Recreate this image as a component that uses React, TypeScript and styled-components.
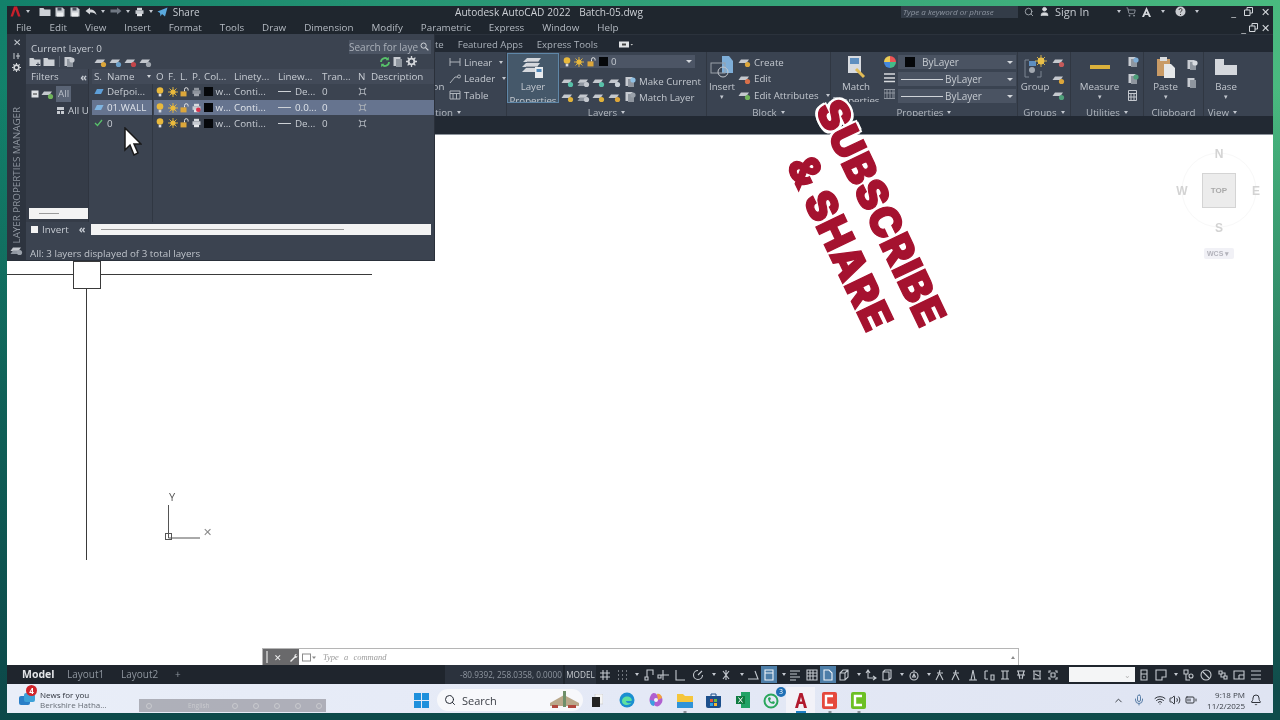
import React from 'react';
import styled, { createGlobalStyle } from 'styled-components';
import { ChevronUp, Mic, Wifi, Volume2, BatteryMedium, Search as SearchIcon, User, ShoppingCart, Bell } from 'lucide-react';

const GlobalStyle = createGlobalStyle`
  html, body { margin: 0; padding: 0; background: #0e5552; }
  * { box-sizing: border-box; }
  svg { flex: none; }
  #root { width: 1280px; height: 720px; overflow: hidden; }
`;

const Frame = styled.div`
  width: 1280px;
  height: 720px;
  padding: 6px 7px 7px 7px;
  font-family: 'Open Sans', 'Liberation Sans', sans-serif;
  background: linear-gradient(180deg, rgba(12, 70, 72, 0) 12%, rgba(12, 70, 72, 0.55) 55%, rgba(12, 70, 72, 0.95) 96%),
    linear-gradient(95deg, #12806a 0%, #2c9a76 40%, #4cbc80 100%);
  filter: blur(0.35px);
`;

const Window = styled.div`
  position: relative;
  display: flex;
  flex-direction: column;
  height: 100%;
  overflow: hidden;
  background: #fff;
`;

const TitleBar = styled.div`
  display: flex;
  align-items: center;
  height: 14px;
  flex: none;
  padding-bottom: 3px;
  background: #1f262e;
  color: #c6cbd1;
  font-size: 10px;
  white-space: nowrap;
`;

const QuickAccess = styled.div`
  display: flex;
  align-items: center;
  gap: 4.6px;
  width: 448px;
  padding-left: 3px;
  font-size: 10px;
`;

const DocTitle = styled.div`
  width: 446px;
  font-size: 10.1px;
  word-spacing: 0.3px;
  color: #ccd0d5;
`;

const KeywordBox = styled.div`
  width: 117px;
  height: 12px;
  margin-right: 6px;
  padding-left: 2px;
  background: #333c48;
  color: #8d95a1;
  font-size: 8px;
  font-style: italic;
  line-height: 12px;
`;

const TitleTools = styled.div`
  display: flex;
  align-items: center;
  flex: 1;
  gap: 5px;
  font-size: 11px;
`;

const ToolGap = styled.span<{ $w: number }>`
  display: inline-block;
  width: ${({ $w }) => $w}px;
  flex: none;
`;

const WinButtons = styled.div<{ $small?: boolean }>`
  display: flex;
  align-items: center;
  gap: ${({ $small }) => ($small ? 3 : 8)}px;
  margin-left: auto;
  padding-right: 3px;
  font-size: 11px;
  color: #d4d8dc;
`;

const MenuBar = styled.div`
  display: flex;
  align-items: center;
  height: 14px;
  flex: none;
  gap: 18px;
  padding-left: 9px;
  background: #1f262e;
  color: #b4bac2;
  font-size: 9.8px;
  white-space: nowrap;
`;

const TabRow = styled.div`
  display: flex;
  align-items: center;
  height: 18px;
  flex: none;
  gap: 14px;
  padding: 2px 0 0 385px;
  background: #222933;
  border-top: 1px solid #2b323c;
  color: #aab1ba;
  font-size: 9.6px;
  white-space: nowrap;
`;

const TabFlag = styled.svg`
  margin-left: 7px;
`;

const Ribbon = styled.div`
  display: flex;
  height: 64px;
  flex: none;
  overflow: hidden;
  background: #3a4351;
  color: #c3c8cf;
  font-size: 9.7px;
  white-space: nowrap;
`;

const Panel = styled.div<{ $w: number }>`
  display: flex;
  flex-direction: column;
  width: ${({ $w }) => $w}px;
  flex: none;
  border-right: 1px solid #303742;
`;

const PanelBody = styled.div<{ $end?: boolean }>`
  display: flex;
  height: 53px;
  padding-top: 2px;
  justify-content: ${({ $end }) => ($end ? 'flex-end' : 'flex-start')};
`;

const PanelLabel = styled.div<{ $pr?: number }>`
  height: 11px;
  padding-right: ${({ $pr }) => $pr ?? 0}px;
  text-align: ${({ $pr }) => ($pr ? 'right' : 'center')};
  line-height: 16px;
  font-size: 9.7px;
  color: #b3b9c1;
`;

const Caret = styled.span`
  display: inline-block;
  margin-left: 4px;
  vertical-align: 2px;
  border-left: 2.5px solid transparent;
  border-right: 2.5px solid transparent;
  border-top: 3px solid #c3c8cf;
`;

const QuickCaret = styled(Caret)`
  margin-left: 0;
`;

const BigButton = styled.div<{ $w: number; $active?: boolean; $ml?: number }>`
  position: relative;
  display: flex;
  flex-direction: column;
  align-items: center;
  width: ${({ $w }) => $w}px;
  height: 48px;
  flex: none;
  margin-left: ${({ $ml }) => $ml ?? 0}px;
  overflow: hidden;
  line-height: 14px;
  background: ${({ $active }) => ($active ? '#45586a' : 'transparent')};
  outline: ${({ $active }) => ($active ? '1px solid #5f87a8' : 'none')};
`;

const BigIcon = styled.div`
  display: flex;
  align-items: center;
  justify-content: center;
  height: 26px;
  flex: none;
`;

const BigCaret = styled.div`
  height: 8px;
  line-height: 6px;
  font-size: 7px;
  color: #c3c8cf;
`;

const ButtonStack = styled.div<{ $ml?: number; $w?: number }>`
  display: flex;
  flex-direction: column;
  margin-left: ${({ $ml }) => $ml ?? 0}px;
  width: ${({ $w }) => ($w ? `${$w}px` : 'auto')};
`;

const StackRow = styled.div<{ $h?: number }>`
  display: flex;
  align-items: center;
  height: ${({ $h }) => $h ?? 16.5}px;
  gap: 3px;
`;

const IconGroup = styled.div<{ $w: number }>`
  display: flex;
  align-items: center;
  justify-content: space-between;
  width: ${({ $w }) => $w}px;
  margin: 0 1px 0 3px;
`;

const LayerCombo = styled.div`
  display: flex;
  align-items: center;
  width: 135px;
  height: 13px;
  margin: 1px 0 6px 2px;
  padding: 0 3px;
  gap: 3px;
  background: #4c5565;
`;

const Swatch = styled.span<{ $size?: number }>`
  display: inline-block;
  width: ${({ $size }) => $size ?? 9}px;
  height: ${({ $size }) => $size ?? 9}px;
  flex: none;
  background: #05070a;
`;

const ComboArrow = styled.span`
  margin-left: auto;
  border-left: 3px solid transparent;
  border-right: 3px solid transparent;
  border-top: 3px solid #d3d7dc;
`;

const PropCombo = styled.div`
  display: flex;
  align-items: center;
  width: 118px;
  height: 14px;
  margin: 0 0 3px 0;
  padding: 0 3px;
  background: #4a5362;
  color: #c6cbd1;
  font-size: 10px;
  &:first-child {
    margin-top: 1px;
  }
`;

const ComboLine = styled.span`
  width: 42px;
  height: 1px;
  margin-right: 2px;
  background: #d0d4d9;
`;

const SwatchBox = styled.span`
  display: flex;
  align-items: center;
  margin: 0 7px 0 4px;
`;

const Strip = styled.div`
  height: 19px;
  flex: none;
  background: #222933;
  border-bottom: 1px solid #8d949c;
`;

const Canvas = styled.div`
  position: relative;
  flex: 1;
  background: #fff;
`;

const Drawing = styled.svg`
  position: absolute;
  left: 0;
  top: 0;
`;

const AxisLabel = styled.span<{ $x: number; $y: number; $faint?: boolean }>`
  position: absolute;
  left: ${({ $x }) => $x}px;
  top: ${({ $y }) => $y}px;
  font-size: 11px;
  line-height: 12px;
  color: ${({ $faint }) => ($faint ? '#8a8a8a' : '#555')};
`;

const Sticker = styled.div<{ $x: number; $y: number; $size: number }>`
  position: absolute;
  left: ${({ $x }) => $x}px;
  top: ${({ $y }) => $y}px;
  transform: translate(-50%, -50%) rotate(64.5deg);
  font-family: Inter, 'Liberation Sans', sans-serif;
  font-weight: 900;
  font-size: ${({ $size }) => $size}px;
  line-height: 1;
  letter-spacing: 0.6px;
  white-space: nowrap;
  color: #a5122f;
  -webkit-text-stroke: 1.2px #a5122f;
  text-shadow: 3px 0 0 #fff, -3px 0 0 #fff, 0 3px 0 #fff, 0 -3px 0 #fff, 2.5px 2.5px 0 #fff, -2.5px 2.5px 0 #fff,
    2.5px -2.5px 0 #fff, -2.5px -2.5px 0 #fff;
`;

const CompassLetter = styled.span<{ $x: number; $y: number }>`
  position: absolute;
  left: ${({ $x }) => $x}px;
  top: ${({ $y }) => $y}px;
  transform: translate(-50%, -50%);
  font-family: 'Liberation Sans', sans-serif;
  font-weight: 700;
  font-size: 12px;
  color: #d3d3d3;
`;

const CompassTop = styled.div`
  position: absolute;
  left: 1195px;
  top: 38px;
  display: flex;
  align-items: center;
  justify-content: center;
  width: 34px;
  height: 35px;
  background: #ececec;
  border: 1px solid #d4d4d4;
  font-family: 'Liberation Sans', sans-serif;
  font-size: 8px;
  font-weight: 700;
  color: #a9a9a9;
`;

const WcsTag = styled.div`
  position: absolute;
  left: 1197px;
  top: 113px;
  width: 30px;
  height: 11px;
  padding-left: 3px;
  border-radius: 2px;
  background: #f1f1f6;
  font-family: 'Liberation Sans', sans-serif;
  font-size: 7px;
  font-weight: 700;
  line-height: 11px;
  color: #b3b3bb;
`;

const CommandLine = styled.div`
  position: absolute;
  left: 255px;
  bottom: 0;
  display: flex;
  width: 757px;
  height: 17px;
  border: 1px solid #b5b5b5;
  border-bottom: none;
  background: #fff;
`;

const CommandTools = styled.div`
  display: flex;
  align-items: center;
  width: 36px;
  flex: none;
  gap: 7px;
  padding-left: 3px;
  background: #69696b;
  color: #f2f2f2;
  font-size: 9px;
`;

const CommandGrip = styled.span`
  width: 2px;
  height: 12px;
  margin-right: -1px;
  background: #b5b5b5;
`;

const CommandInput = styled.div`
  display: flex;
  align-items: center;
  flex: 1;
  gap: 7px;
  padding: 0 3px;
  font-family: 'Liberation Serif', serif;
  font-size: 8.5px;
  font-style: italic;
  word-spacing: 3px;
  color: #9a9a9a;
`;

const CommandCaret = styled.span`
  margin-left: auto;
  border-left: 2.5px solid transparent;
  border-right: 2.5px solid transparent;
  border-bottom: 3px solid #8a8a8a;
`;

const LayoutBar = styled.div`
  display: flex;
  align-items: center;
  height: 19px;
  flex: none;
  padding-left: 15px;
  background: #1f252d;
  color: #8e959e;
  font-size: 10px;
  white-space: nowrap;
`;

const LayoutTab = styled.span<{ $current?: boolean; $w: number }>`
  width: ${({ $w }) => $w}px;
  margin-top: -2px;
  flex: none;
  font-weight: ${({ $current }) => ($current ? 700 : 400)};
  color: ${({ $current }) => ($current ? '#e3e5e8' : '#8e959e')};
  font-size: ${({ $current }) => ($current ? 10.5 : 10)}px;
`;

const CoordBox = styled.div`
  width: 118px;
  height: 19px;
  margin-left: 257px;
  padding-left: 15px;
  background: #2b323d;
  color: #8f96a0;
  font-size: 8.2px;
  line-height: 19px;
`;

const ModelBox = styled.div`
  width: 31px;
  height: 19px;
  margin-left: 2px;
  background: #2b323d;
  color: #c8ccd1;
  font-size: 8.2px;
  line-height: 19px;
  text-align: center;
`;

const StatusCell = styled.span<{ $w: number; $active?: boolean }>`
  display: flex;
  align-items: center;
  justify-content: center;
  width: ${({ $w }) => $w}px;
  height: 17px;
  flex: none;
  background: ${({ $active }) => ($active ? '#4d7ea8' : 'transparent')};
  color: #c4c9cf;
`;

const ScaleInput = styled.div`
  display: flex;
  align-items: center;
  justify-content: flex-end;
  width: 66px;
  height: 15px;
  flex: none;
  margin: 0 0 0 8px;
  padding-right: 4px;
  background: #f4f5f6;
  color: #b5b5b5;
  font-size: 8px;
`;

const Taskbar = styled.div`
  position: relative;
  display: flex;
  align-items: center;
  height: 29px;
  flex: none;
  padding-top: 3px;
  background: linear-gradient(90deg, #e9eef8 0%, #e4e9f6 50%, #dfe4f2 100%);
  color: #2a2f38;
`;

const NewsWidget = styled.div`
  position: relative;
  display: flex;
  align-items: center;
  width: 407px;
  flex: none;
  padding-left: 11px;
  gap: 4px;
`;

const NewsBadge = styled.span`
  position: absolute;
  left: 19px;
  top: -5px;
  width: 11px;
  height: 11px;
  border-radius: 50%;
  background: #d0242b;
  color: #fff;
  font-size: 8px;
  font-weight: 700;
  line-height: 11px;
  text-align: center;
`;

const NewsText = styled.div`
  font-size: 8px;
  line-height: 10px;
  color: #2a2f38;
  white-space: nowrap;
`;

const NewsSub = styled.div`
  color: #666c75;
`;

const LangBar = styled.div`
  position: absolute;
  left: 132px;
  bottom: -2px;
  display: flex;
  align-items: center;
  width: 187px;
  height: 13px;
  padding-left: 7px;
  background: rgba(150, 150, 158, 0.7);
  color: #c9cace;
  font-size: 6.5px;
`;

const LangText = styled.span`
  margin: 0 22px 0 21px;
`;

const LangGlyph = styled.span`
  width: 6px;
  height: 6px;
  margin-right: 15px;
  flex: none;
  border: 1px solid #c9cace;
  border-radius: 50%;
`;

const SearchPill = styled.div`
  display: flex;
  align-items: center;
  width: 146px;
  height: 22px;
  flex: none;
  margin-left: 8px;
  padding-left: 7px;
  gap: 6px;
  border-radius: 11px;
  background: #f7f8fb;
  font-size: 11px;
  color: #3b3f46;
`;

const PillPicture = styled.span`
  margin-left: auto;
  margin-right: 2px;
  display: flex;
`;

const AppSlot = styled.span<{ $w: number; $open?: boolean; $current?: boolean }>`
  position: relative;
  display: flex;
  align-items: center;
  justify-content: center;
  width: ${({ $w }) => $w}px;
  height: 26px;
  flex: none;
  background: ${({ $current }) => ($current ? '#f2f2f8' : 'transparent')};
  &::after {
    content: '';
    display: ${({ $open, $current }) => ($open || $current ? 'block' : 'none')};
    position: absolute;
    bottom: 0;
    left: 50%;
    width: ${({ $current }) => ($current ? 10 : 3)}px;
    height: 2px;
    transform: translateX(-50%);
    background: ${({ $current }) => ($current ? '#1f7fc4' : '#8a8f98')};
  }
`;

const AppBadge = styled.span`
  position: absolute;
  right: 0;
  top: 0;
  width: 10px;
  height: 10px;
  border-radius: 50%;
  background: #1f6fb5;
  color: #fff;
  font-size: 7px;
  line-height: 10px;
  text-align: center;
`;

const Tray = styled.div`
  display: flex;
  align-items: center;
  margin-left: auto;
  padding-right: 11px;
  color: #30343b;
`;

const Clock = styled.div`
  width: 43px;
  margin-left: 5px;
  font-size: 8px;
  line-height: 11px;
  text-align: right;
  color: #3b4048;
`;

/* Layer palette, floats over the ribbon */
const Palette = styled.div`
  position: absolute;
  left: 0;
  top: 28px;
  display: flex;
  width: 428px;
  height: 227px;
  background: #3b4350;
  border-right: 1px solid #2a303a;
  border-bottom: 1px solid #2a303a;
  color: #c7ccd3;
  font-size: 9.8px;
  white-space: nowrap;
`;

const PaletteSide = styled.div`
  position: relative;
  display: flex;
  flex-direction: column;
  align-items: center;
  width: 19px;
  flex: none;
  padding-top: 2px;
  gap: 3px;
  background: #2d343f;
  color: #c5cad0;
`;

const SideTitle = styled.div`
  position: absolute;
  left: 3px;
  bottom: 17px;
  writing-mode: vertical-rl;
  transform: rotate(180deg);
  font-size: 9.8px;
  color: #8f96a0;
`;

const SideFoot = styled.div`
  position: absolute;
  left: 3px;
  bottom: 1px;
`;

const PaletteMain = styled.div`
  display: flex;
  flex-direction: column;
  flex: 1;
  min-width: 0;
`;

const PaletteHead = styled.div`
  display: flex;
  align-items: center;
  justify-content: space-between;
  height: 15px;
  flex: none;
  margin-top: 5px;
  padding: 0 3px 0 5px;
`;

const CurrentLayer = styled.span`
  padding-top: 3px;
`;

const LayerSearch = styled.div`
  display: flex;
  align-items: center;
  justify-content: space-between;
  width: 82px;
  height: 14px;
  padding: 0 2px 0 0;
  background: #4c5564;
  color: #aab0b9;
  font-size: 10px;
`;

const PaletteTools = styled.div`
  display: flex;
  align-items: center;
  height: 15px;
  flex: none;
  padding: 0 8px 0 3px;
  gap: 2px;
`;

const ToolDivider = styled.span`
  width: 1px;
  height: 11px;
  margin: 0 2px;
  background: #59616e;
`;

const Columns = styled.div`
  display: flex;
  height: 153px;
  flex: none;
`;

const FilterPane = styled.div`
  display: flex;
  flex-direction: column;
  width: 63px;
  flex: none;
  background: #353c48;
  border-right: 1px solid #2f3540;
`;

const FilterHead = styled.div`
  display: flex;
  justify-content: space-between;
  align-items: center;
  height: 15px;
  padding: 0 0 0 5px;
  background: #3f4755;
`;

const FilterAll = styled.div`
  display: flex;
  align-items: center;
  height: 16px;
  margin-top: 2px;
  padding-left: 5px;
  gap: 2px;
`;

const AllChip = styled.span`
  padding: 0 2px;
  background: #5a6475;
  color: #b9bfc8;
  line-height: 16px;
`;

const FilterChild = styled.div`
  display: flex;
  align-items: center;
  height: 14px;
  margin-top: 1px;
  padding-left: 30px;
  gap: 3px;
  overflow: hidden;
`;

const TableArea = styled.div`
  position: relative;
  flex: 1;
  min-width: 0;
  margin-left: 3px;
`;

const cols = '13px 47px 2px 12px 12px 12px 12px 30px 44px 44px 36px 13px 1fr';

const TableHead = styled.div`
  display: grid;
  grid-template-columns: ${cols};
  align-items: center;
  height: 15px;
  background: #424a58;
`;

const TableRow = styled.div<{ $selected?: boolean }>`
  display: grid;
  grid-template-columns: ${cols};
  align-items: center;
  height: 15.7px;
  background: ${({ $selected }) => ($selected ? '#66748f' : 'transparent')};
  color: ${({ $selected }) => ($selected ? '#dfe3e9' : '#c7ccd3')};
`;

const Cell = styled.span`
  display: flex;
  align-items: center;
  overflow: hidden;
  padding-left: 2px;
`;

const HeadArrow = styled.span`
  margin-left: auto;
  margin-right: 1px;
  border-left: 2.5px solid transparent;
  border-right: 2.5px solid transparent;
  border-top: 3px solid #d0d4d9;
`;

const NameGap = styled.span`
  height: 100%;
  background: #3b4350;
`;

const LineMark = styled.span`
  width: 13px;
  height: 1px;
  margin-right: 4px;
  flex: none;
  background: #cdd1d6;
`;

const NameRule = styled.div`
  position: absolute;
  left: 60px;
  top: 15px;
  bottom: 0;
  width: 1px;
  background: #303742;
`;

const BottomRow = styled.div`
  display: flex;
  align-items: center;
  height: 14px;
  flex: none;
  padding: 0 3px;
`;

const FilterScroll = styled.div`
  display: flex;
  align-items: center;
  width: 59px;
  height: 11px;
  margin: auto 0 3px 3px;
  padding-left: 10px;
  background: #f3f3f3;
`;

const ScrollThumb = styled.span<{ $w: number }>`
  display: block;
  width: ${({ $w }) => $w}px;
  height: 1px;
  background: #9a9a9a;
`;

const InvertBox = styled.span`
  width: 7px;
  height: 7px;
  margin: 0 4px 0 2px;
  background: #f3f3f3;
`;

const CollapseMark = styled.span<{ $ml?: number }>`
  margin-left: ${({ $ml }) => $ml ?? 0}px;
  margin-right: 1px;
  font-size: 11px;
  line-height: 10px;
  font-weight: 700;
  color: #c7ccd3;
`;

const TableScroll = styled.div`
  display: flex;
  align-items: center;
  flex: 1;
  height: 11px;
  margin-left: 5px;
  padding-left: 10px;
  background: #f3f3f3;
`;

const PaletteStatus = styled.div`
  height: 14px;
  flex: none;
  margin-top: 10px;
  padding-left: 4px;
  line-height: 15px;
  color: #bfc4cb;
`;

const Cursor = styled.svg`
  position: absolute;
  left: 117px;
  top: 121px;
`;

/* ---- small drawings ---- */

const Bulb = () => (
  <svg width="8" height="10" viewBox="0 0 8 10">
    <circle cx="4" cy="3.5" r="3.3" fill="#e9b93c" />
    <rect x="2.7" y="6.8" width="2.6" height="2.6" fill="#d9dbe0" />
  </svg>
);

const Sun = () => (
  <svg width="10" height="10" viewBox="0 0 10 10">
    <circle cx="5" cy="5" r="2.6" fill="#e9b93c" />
    <path d="M5 0v10M0 5h10M1.5 1.5l7 7M8.5 1.5l-7 7" stroke="#e9b93c" strokeWidth="0.9" />
  </svg>
);

const Lock = () => (
  <svg width="9" height="10" viewBox="0 0 9 10">
    <path d="M4.500 4.500V2.500a1.800 1.800 0 0 1 3.600 0v1" stroke="#e5e5e5" strokeWidth="1" fill="none" />
    <rect x="0.5" y="4.4" width="6" height="5" fill="#dca63a" />
  </svg>
);

const Printer = ({ off, dim }: { off?: boolean; dim?: boolean }) => (
  <svg width="9" height="10" viewBox="0 0 9 10">
    <rect x="2" y="0.8" width="5" height="2.5" fill={dim ? '#8e949d' : '#d6d9dd'} />
    <rect x="0.5" y="3.3" width="8" height="3.6" fill={dim ? '#8e949d' : '#c7cbd1'} />
    <rect x="2" y="6.5" width="5" height="2.7" fill={dim ? '#a3a8b0' : '#e5e7ea'} />
    {off && <circle cx="6.3" cy="6.8" r="2.3" fill="#d8304a" />}
  </svg>
);

const FreezeMark = () => (
  <svg width="9" height="9" viewBox="0 0 9 9">
    <path d="M1 1l2 2M8 1L6 3M1 8l2-2M8 8L6 6" stroke="#a7adb5" strokeWidth="1.2" />
    <rect x="2.6" y="2.6" width="3.8" height="3.8" fill="none" stroke="#a7adb5" strokeWidth="0.8" />
  </svg>
);

const Sheet = ({ color }: { color: string }) => (
  <svg width="10" height="7" viewBox="0 0 12 7">
    <path d="M3.5 0.5H11.5L8.5 6.5H0.5Z" fill={color} />
  </svg>
);

const LayerTool = ({ dot = '#7fb05a', stack = false }: { dot?: string; stack?: boolean }) => (
  <svg width="13" height="12" viewBox="0 0 13 12">
    <path d="M3 3.5H11L8.5 7H0.5Z" fill="#c4c8ce" />
    {stack && <path d="M3 6.5H11L8.5 10H0.5Z" fill="#8f96a0" />}
    <circle cx="9.5" cy="8.5" r="2.6" fill={dot} />
  </svg>
);

const Folder = ({ plus }: { plus?: boolean }) => (
  <svg width="12" height="11" viewBox="0 0 12 11">
    <path d="M0.5 2h4l1 1.5h6v6.500H0.5Z" fill="#cdd1d6" />
    {plus && <path d="M7 8.500h4M9 6.500v4" stroke="#3b4350" strokeWidth="1" />}
  </svg>
);

const Gear = ({ size = 11 }: { size?: number }) => (
  <svg width={size} height={size} viewBox="0 0 11 11">
    <circle cx="5.5" cy="5.5" r="2.9" fill="none" stroke="#d3d6da" strokeWidth="1.9" />
    <path d="M5.5 0v2M5.5 9v2M0 5.5h2M9 5.5h2M1.6 1.6l1.4 1.4M8 8l1.4 1.4M9.4 1.6L8 3M3 8L1.6 9.4" stroke="#d3d6da" strokeWidth="1.3" />
  </svg>
);

const Refresh = () => (
  <svg width="12" height="12" viewBox="0 0 12 12">
    <path d="M2 6a4 4 0 0 1 7-2.6M10 6a4 4 0 0 1-7 2.6" stroke="#58c06a" strokeWidth="1.8" fill="none" />
    <path d="M9.8 0.8v3.4H6.6M2.2 11.2V7.8h3.2" fill="#58c06a" />
  </svg>
);

const SmallSearch = () => (
  <svg width="9" height="9" viewBox="0 0 9 9">
    <circle cx="3.6" cy="3.6" r="2.6" fill="none" stroke="#d0d4d9" strokeWidth="1" />
    <path d="M5.6 5.6L8.4 8.4" stroke="#d0d4d9" strokeWidth="1.2" />
  </svg>
);

const Save = () => (
  <svg width="10" height="10" viewBox="0 0 10 10">
    <path d="M0.5 0.5h7l2 2v7h-9Z" fill="#c9cdd2" />
    <rect x="2.5" y="0.5" width="4" height="3" fill="#49505c" />
    <rect x="2" y="5.5" width="6" height="4" fill="#eceef0" />
  </svg>
);

const Doc = ({ mark }: { mark?: string }) => (
  <svg width="11" height="12" viewBox="0 0 11 12">
    <rect x="0.5" y="1" width="7" height="9" fill="#c7cbd1" />
    <rect x="3" y="3" width="6" height="8" fill="#8f969f" />
    {mark && <circle cx="8" cy="4" r="2.6" fill={mark} />}
  </svg>
);

const Restore = () => (
  <svg width="9" height="9" viewBox="0 0 9 9">
    <path d="M0.5 3h5.500v5.500H0.5ZM3 3V0.5h5.500V6H6" fill="none" stroke="#d4d8dc" />
  </svg>
);

const Compass = () => (
  <Drawing width="1266" height="200" viewBox="0 0 1266 200">
    <circle cx="1212" cy="55" r="37" fill="none" stroke="#f8f8f8" strokeWidth="1" />
  </Drawing>
);

const statusPaths: { d: string; w: number; active?: boolean; caret?: boolean }[] = [
  { d: 'M2 11V8h3v3ZM4 8V1h6v5', w: 15 },
  { d: 'M1 6h3v3H1ZM6 1v10M4 6h8', w: 14 },
  { d: 'M2 1v10h9', w: 19 },
  { d: 'M6 1.500a4.500 4.500 0 1 0 4.500 4.500M6 6l4-4', w: 18 },
  { w: 10, d: '', caret: true },
  { d: 'M6 1v10M3 2l6 8M9 2l-6 8', w: 18 },
  { w: 10, d: '', caret: true },
  { d: 'M1 10h10L8 2', w: 16 },
  { d: 'M2 1h8v10H2ZM2 4h8', w: 16, active: true },
  { w: 10, d: '', caret: true },
  { d: 'M1 2h10M1 5h7M1 8h10M1 11h6', w: 16 },
  { d: 'M1 1h10v10H1ZM1 4h10M1 7h10M4 1v10M7 1v10', w: 17 },
  { d: 'M2 1h5l3 3v7H2Z', w: 16, active: true },
  { d: 'M2 4l3-3h5v7l-3 3H2ZM2 4h5v7M7 4l3-3', w: 16 },
  { w: 10, d: '', caret: true },
  { d: 'M3 1v8h8M1 4l2-3 2 3M8 7l3 2-3 2', w: 17 },
  { d: 'M2 3l2-2h6v8l-2 2H2ZM2 3h6v8', w: 16 },
  { w: 10, d: '', caret: true },
  { d: 'M6 1v2M2 7a4 4 0 1 0 8 0 4 4 0 0 0-8 0M6 5l1.500 3h-3Z', w: 17 },
  { w: 10, d: '', caret: true },
  { d: 'M6 1l-1 4-3 6M6 5l3 6M3 4h6', w: 16 },
  { d: 'M6 1l-1 4-3 6M6 5l3 6M3 4h6', w: 16 },
  { d: 'M6 1l-2 10M6 1l2 10M2 11h8', w: 17 },
  { d: 'M2 2h3M2 2v8M2 10h3M8 6h3v5H8Z', w: 16 },
  { d: 'M2 2h8M2 10h8M4 2v8M8 2v8', w: 16 },
  { d: 'M2 2h8M3 2l2 8M9 2L7 10M2 6h8', w: 16 },
  { d: 'M2 2h8M3 2v8M9 2v8M2 10h8M4 5l4 2', w: 16 },
  { d: 'M2 4V2h2M8 2h2v2M10 8v2H8M4 10H2V8M4 4h4v4H4Z', w: 16 },
];

const trailingPaths: { d: string; w: number; caret?: boolean }[] = [
  { d: 'M3 1h6v10H3ZM3 5h6M5 8h2', w: 18 },
  { d: 'M1 1h10v7H7v3H1Z', w: 16 },
  { w: 10, d: '', caret: true },
  { d: 'M2 1h4v4H2ZM7 7a2 2 0 1 0 4 0 2 2 0 0 0-4 0M4 5v6h4', w: 18 },
  { d: 'M1 6a5 5 0 1 0 10 0 5 5 0 0 0-10 0M3 3l6 6', w: 17 },
  { d: 'M2 2h3v3H2ZM7 7h3v3H7ZM5 4h3v3M4 5v3h3', w: 17 },
  { d: 'M1 2h10v8H1ZM6 6h5M6 6v4', w: 16 },
  { d: 'M1 2h10M1 6h10M1 10h10', w: 17 },
];

const StatusGlyph = ({ d, w, active, caret }: { d: string; w: number; active?: boolean; caret?: boolean }) => (
  <StatusCell $w={w} $active={active}>
    {caret ? (
      <Caret />
    ) : (
      <svg width="12" height="12" viewBox="0 0 12 12">
        <path d={d} fill="none" stroke={active ? '#f0f4f8' : '#c4c9cf'} strokeWidth="1.1" />
      </svg>
    )}
  </StatusCell>
);

const layerRows = [
  { name: 'Defpoi...', sheet: '#5e9fd8', width: 'De...', plotDim: true },
  { name: '01.WALL', sheet: '#7fb4e0', width: '0.0...', selected: true, plotOff: true },
  { name: '0', current: true, width: 'De...' },
];

const Head = ['O', 'F.', 'L.', 'P.'];

export default function App() {
  return (
    <Frame>
      <GlobalStyle />
      <Window>
        <TitleBar>
          <QuickAccess>
            <svg width="11" height="11" viewBox="0 0 11 11">
              <path d="M0.5 10.5L4 0.5h3l3.5 10H8L5.5 3.5 3 10.5Z" fill="#c8202b" />
            </svg>
            <QuickCaret />
            <ToolGap $w={0} />
            <Folder />
            <Save />
            <Save />
            <svg width="12" height="9" viewBox="0 0 12 9">
              <path d="M5 0.5L0.5 4 5 7.5V5.5c3 0 5 .5 6.5 2.5C11 4.5 8.5 2.5 5 2.5Z" fill="#d4d7db" />
            </svg>
            <QuickCaret />
            <svg width="12" height="9" viewBox="0 0 12 9">
              <path d="M7 0.5L11.5 4 7 7.5V5.5H0.5v-3H7Z" fill="#6f7782" />
            </svg>
            <QuickCaret />
            <Printer />
            <QuickCaret />
            <svg width="11" height="10" viewBox="0 0 11 10">
              <path d="M10.5 0.5L8 9.5 5 7 3.5 9.5 3 6 0.5 4.5Z" fill="#5aa9dd" />
            </svg>
            <span>Share</span>
          </QuickAccess>
          <DocTitle>Autodesk AutoCAD 2022&nbsp;&nbsp;&nbsp;Batch-05.dwg</DocTitle>
          <KeywordBox>Type a keyword or phrase</KeywordBox>
          <TitleTools>
            <SearchIcon size={10} color="#aeb4bb" />
            <User size={11} color="#d9dcdf" fill="#d9dcdf" />
            <span>Sign In</span>
            <ToolGap $w={14} />
            <Caret />
            <ShoppingCart size={10} color="#9ba1a9" />
            <svg width="11" height="10" viewBox="0 0 11 10">
              <path d="M5.5 0L1 10h2l1-2h3l1 2h2ZM4.6 6.5l.9-2.2.9 2.2Z" fill="#d4d7db" />
            </svg>
            <Caret />
            <ToolGap $w={0} />
            <svg width="11" height="11" viewBox="0 0 11 11">
              <circle cx="5.5" cy="5.5" r="5" fill="#c9ccd1" />
              <path d="M4 4a1.5 1.5 0 1 1 2 1.4c-.4.2-.5.5-.5 1M5.5 8v1" stroke="#333" fill="none" />
            </svg>
            <Caret />
            <WinButtons>
              <span>_</span>
              <Restore />
              <span>✕</span>
            </WinButtons>
          </TitleTools>
        </TitleBar>

        <MenuBar>
          <span>File</span>
          <span>Edit</span>
          <span>View</span>
          <span>Insert</span>
          <span>Format</span>
          <span>Tools</span>
          <span>Draw</span>
          <span>Dimension</span>
          <span>Modify</span>
          <span>Parametric</span>
          <span>Express</span>
          <span>Window</span>
          <span>Help</span>
          <WinButtons $small>
            <span>_</span>
            <Restore />
            <span>✕</span>
          </WinButtons>
        </MenuBar>

        <TabRow>
          <span>Collaborate</span>
          <span>Featured Apps</span>
          <span>Express Tools</span>
          <TabFlag width="14" height="7" viewBox="0 0 14 7">
            <rect x="0" y="0.5" width="10" height="6" fill="#e2e4e7" />
            <rect x="3" y="2.5" width="4" height="2" fill="#444" />
            <path d="M11.5 3h2.5l-1.2 1.5Z" fill="#ccc" />
          </TabFlag>
        </TabRow>

        <Ribbon>
          <Panel $w={500}>
            <PanelBody $end>
              <BigButton $w={50}>
                <BigIcon />
                <span>Dimension</span>
              </BigButton>
              <ButtonStack $ml={4} $w={57}>
                <StackRow>
                  <svg width="12" height="10" viewBox="0 0 12 10">
                    <path d="M1 1v8M11 1v8M1 5h10" stroke="#aeb4bb" fill="none" />
                  </svg>
                  <span>Linear</span>
                  <Caret />
                </StackRow>
                <StackRow>
                  <svg width="12" height="10" viewBox="0 0 12 10">
                    <path d="M1 9l5-6h3" stroke="#aeb4bb" fill="none" />
                    <circle cx="10" cy="2.5" r="1.5" fill="none" stroke="#aeb4bb" />
                  </svg>
                  <span>Leader</span>
                  <Caret />
                </StackRow>
                <StackRow>
                  <svg width="12" height="10" viewBox="0 0 12 10">
                    <path d="M1 1h10v8H1ZM1 3.5h10M4 3.5V9M7.5 3.5V9" stroke="#aeb4bb" fill="none" />
                  </svg>
                  <span>Table</span>
                </StackRow>
              </ButtonStack>
            </PanelBody>
            <PanelLabel $pr={45}>
              Annotation
              <Caret />
            </PanelLabel>
          </Panel>

          <Panel $w={200}>
            <PanelBody>
              <BigButton $w={50} $active $ml={1}>
                <BigIcon>
                  <svg width="24" height="24" viewBox="0 0 24 24">
                    <path d="M6 3h14l-3 4H2ZM5 8h14l-3 4H1ZM5 13h12l-3 4H1Z" fill="#d5d8dd" />
                    <path d="M6 7h11M5 12h11" stroke="#6e7683" />
                    <rect x="14" y="12" width="8" height="11" fill="#e9ebee" />
                    <rect x="15.5" y="14" width="5" height="3" fill="#4f87b8" />
                  </svg>
                </BigIcon>
                <span>Layer</span>
                <span>Properties</span>
              </BigButton>
              <ButtonStack>
                <LayerCombo>
                  <Bulb />
                  <Sun />
                  <Lock />
                  <Swatch />
                  <span>0</span>
                  <ComboArrow />
                </LayerCombo>
                <StackRow $h={17}>
                  <IconGroup $w={60}>
                    <LayerTool dot="#58c0a8" />
                    <LayerTool dot="#c4c8ce" stack />
                    <LayerTool dot="#58c0a8" />
                    <LayerTool dot="#c9d0d6" />
                  </IconGroup>
                  <Doc mark="#8fc0e4" />
                  <span>Make Current</span>
                </StackRow>
                <StackRow $h={17}>
                  <IconGroup $w={60}>
                    <LayerTool dot="#e0b23a" />
                    <LayerTool dot="#c4c8ce" stack />
                    <LayerTool dot="#e0b23a" />
                    <LayerTool dot="#dca63a" />
                  </IconGroup>
                  <Doc mark="#9aa1aa" />
                  <span>Match Layer</span>
                </StackRow>
              </ButtonStack>
            </PanelBody>
            <PanelLabel>
              Layers
              <Caret />
            </PanelLabel>
          </Panel>

          <Panel $w={124}>
            <PanelBody>
              <BigButton $w={30}>
                <BigIcon>
                  <svg width="24" height="24" viewBox="0 0 24 24">
                    <path d="M12 1h7l4 5v12H12Z" fill="#7eaed8" />
                    <rect x="1" y="8" width="14" height="10" fill="none" stroke="#9aa1aa" />
                    <circle cx="13" cy="17" r="5" fill="none" stroke="#c2c6cc" />
                  </svg>
                </BigIcon>
                <span>Insert</span>
                <BigCaret>▾</BigCaret>
              </BigButton>
              <ButtonStack $ml={1}>
                <StackRow>
                  <LayerTool dot="#dca63a" />
                  <span>Create</span>
                </StackRow>
                <StackRow>
                  <LayerTool dot="#d8704a" />
                  <span>Edit</span>
                </StackRow>
                <StackRow>
                  <LayerTool dot="#6fb35a" />
                  <span>Edit Attributes</span>
                  <Caret />
                </StackRow>
              </ButtonStack>
            </PanelBody>
            <PanelLabel>
              Block
              <Caret />
            </PanelLabel>
          </Panel>

          <Panel $w={187}>
            <PanelBody>
              <BigButton $w={50}>
                <BigIcon>
                  <svg width="20" height="24" viewBox="0 0 20 24">
                    <rect x="2" y="1" width="13" height="17" fill="#d8dbe0" />
                    <rect x="4" y="3" width="9" height="6" fill="#5f8fc0" />
                    <path d="M10 14l8 8" stroke="#e2bc55" strokeWidth="3" />
                  </svg>
                </BigIcon>
                <span>Match</span>
                <span>Properties</span>
              </BigButton>
              <ButtonStack $ml={3} $w={14}>
                <StackRow $h={16}>
                  <svg width="12" height="12" viewBox="0 0 12 12">
                    <path d="M6 6V0a6 6 0 0 1 6 6Z" fill="#e55" />
                    <path d="M6 6h6a6 6 0 0 1-6 6Z" fill="#4b8" />
                    <path d="M6 6v6a6 6 0 0 1-6-6Z" fill="#48d" />
                    <path d="M6 6H0a6 6 0 0 1 6-6Z" fill="#ec5" />
                  </svg>
                </StackRow>
                <StackRow $h={16}>
                  <svg width="11" height="10" viewBox="0 0 11 10">
                    <path d="M0 1h11M0 5h11M0 8.5h11" stroke="#d6d9dd" strokeWidth="1.6" />
                  </svg>
                </StackRow>
                <StackRow $h={16}>
                  <svg width="11" height="10" viewBox="0 0 11 10">
                    <path d="M0 0.5h11v9H0ZM3 0.5v9M6 0.5v9M9 0.5v9M0 4h11" stroke="#8f96a0" fill="none" />
                  </svg>
                </StackRow>
              </ButtonStack>
              <ButtonStack>
                <PropCombo>
                  <SwatchBox>
                    <Swatch $size={10} />
                  </SwatchBox>
                  ByLayer
                  <ComboArrow />
                </PropCombo>
                <PropCombo>
                  <ComboLine />
                  ByLayer
                  <ComboArrow />
                </PropCombo>
                <PropCombo>
                  <ComboLine />
                  ByLayer
                  <ComboArrow />
                </PropCombo>
              </ButtonStack>
            </PanelBody>
            <PanelLabel>
              Properties
              <Caret />
            </PanelLabel>
          </Panel>

          <Panel $w={53}>
            <PanelBody>
              <BigButton $w={34}>
                <BigIcon>
                  <svg width="24" height="24" viewBox="0 0 24 24">
                    <path d="M6 5H2v17h4M14 22h4V16" fill="none" stroke="#7b8592" />
                    <rect x="6" y="6" width="7" height="5" fill="#5f8fc0" />
                    <circle cx="9" cy="15" r="3" fill="#a2a8b0" />
                    <circle cx="18" cy="6" r="3.4" fill="#e9c04a" />
                    <path d="M18 0v12M12 6h12M14 2l8 8M22 2l-8 8" stroke="#e9c04a" strokeWidth="0.9" />
                  </svg>
                </BigIcon>
                <span>Group</span>
              </BigButton>
              <ButtonStack>
                <StackRow>
                  <LayerTool dot="#c65a5a" />
                </StackRow>
                <StackRow>
                  <LayerTool dot="#dca63a" />
                </StackRow>
                <StackRow>
                  <LayerTool dot="#4fa07a" />
                </StackRow>
              </ButtonStack>
            </PanelBody>
            <PanelLabel>
              Groups
              <Caret />
            </PanelLabel>
          </Panel>

          <Panel $w={73}>
            <PanelBody>
              <BigButton $w={57}>
                <BigIcon>
                  <svg width="20" height="8" viewBox="0 0 20 8">
                    <rect x="0" y="2" width="20" height="4" fill="#dcb23c" />
                  </svg>
                </BigIcon>
                <span>Measure</span>
                <BigCaret>▾</BigCaret>
              </BigButton>
              <ButtonStack>
                <StackRow>
                  <Doc mark="#7eaed8" />
                </StackRow>
                <StackRow>
                  <Doc mark="#4fa07a" />
                </StackRow>
                <StackRow>
                  <svg width="9" height="11" viewBox="0 0 9 11">
                    <path d="M0.5 0.5h8v10h-8ZM0.5 3.5h8M3 3.5v7M6 3.5v7M0.5 7h8" stroke="#c4c8ce" fill="none" />
                  </svg>
                </StackRow>
              </ButtonStack>
            </PanelBody>
            <PanelLabel>
              Utilities
              <Caret />
            </PanelLabel>
          </Panel>

          <Panel $w={60}>
            <PanelBody>
              <BigButton $w={43}>
                <BigIcon>
                  <svg width="20" height="24" viewBox="0 0 20 24">
                    <rect x="1" y="4" width="13" height="17" fill="#c99b66" />
                    <rect x="4" y="2" width="7" height="4" fill="#d9dcdf" />
                    <path d="M8 9h7l4 4v10H8Z" fill="#e6e8ea" />
                  </svg>
                </BigIcon>
                <span>Paste</span>
                <BigCaret>▾</BigCaret>
              </BigButton>
              <ButtonStack>
                <StackRow $h={22}>
                  <Doc mark="#d8dbe0" />
                </StackRow>
                <StackRow $h={14}>
                  <Doc />
                </StackRow>
              </ButtonStack>
            </PanelBody>
            <PanelLabel>Clipboard</PanelLabel>
          </Panel>

          <Panel $w={70}>
            <PanelBody>
              <BigButton $w={44}>
                <BigIcon>
                  <svg width="22" height="16" viewBox="0 0 22 16">
                    <path d="M0 0h9v6h13v10H0Z" fill="#d4d7dc" />
                  </svg>
                </BigIcon>
                <span>Base</span>
                <BigCaret>▾</BigCaret>
              </BigButton>
            </PanelBody>
            <PanelLabel $pr={36}>
              View
              <Caret />
            </PanelLabel>
          </Panel>
        </Ribbon>

        <Strip />

        <Canvas>
          <Drawing width="400" height="440" viewBox="0 0 400 440">
            <path d="M0 139.5H66M93 139.5H365M79.5 153V425" stroke="#3a3a3a" strokeWidth="1" fill="none" />
            <rect x="66.5" y="126.5" width="27" height="27" fill="none" stroke="#3a3a3a" />
            <path d="M161.5 370V403H193" stroke="#555" fill="none" />
            <rect x="158.5" y="398.5" width="6" height="6" fill="none" stroke="#555" />
          </Drawing>
          <AxisLabel $x={162} $y={356}>Y</AxisLabel>
          <AxisLabel $x={196} $y={391} $faint>✕</AxisLabel>
          <Compass />
          <CompassLetter $x={1212} $y={19}>N</CompassLetter>
          <CompassLetter $x={1175} $y={56}>W</CompassLetter>
          <CompassLetter $x={1249} $y={56}>E</CompassLetter>
          <CompassLetter $x={1212} $y={93}>S</CompassLetter>
          <CompassTop>TOP</CompassTop>
          <WcsTag>WCS ▾</WcsTag>
          <CommandLine>
            <CommandTools>
              <CommandGrip />
              <span>✕</span>
              <svg width="9" height="9" viewBox="0 0 9 9">
                <path d="M1 8l4.5-4.5A2 2 0 0 1 8 1L6.5 2.5l1 1L8.5 2.5A2.5 2.5 0 0 1 6 5L2 9Z" fill="#eee" />
              </svg>
            </CommandTools>
            <CommandInput>
              <svg width="14" height="9" viewBox="0 0 14 9">
                <rect x="0.5" y="1" width="8" height="7" fill="none" stroke="#8a8a8a" />
                <path d="M10 3.5h4l-2 2.5Z" fill="#8a8a8a" />
              </svg>
              Type a command
              <CommandCaret />
            </CommandInput>
          </CommandLine>
        </Canvas>

        <LayoutBar>
          <LayoutTab $current $w={45}>Model</LayoutTab>
          <LayoutTab $w={54}>Layout1</LayoutTab>
          <LayoutTab $w={54}>Layout2</LayoutTab>
          <LayoutTab $w={13}>+</LayoutTab>
          <CoordBox>-80.9392, 258.0358, 0.0000</CoordBox>
          <ModelBox>MODEL</ModelBox>
          <StatusGlyph d="M4 1v10M8 1v10M1 4h10M1 8h10" w={18} />
          <StatusGlyph d="M2 2h1M6 2h1M10 2h1M2 6h1M6 6h1M10 6h1M2 10h1M6 10h1M10 10h1" w={15} />
          <StatusGlyph d="" w={12} caret />
          {statusPaths.map((glyph, i) => (
            <StatusGlyph key={i} {...glyph} />
          ))}
          <ScaleInput>⌄</ScaleInput>
          {trailingPaths.map((glyph, i) => (
            <StatusGlyph key={i} {...glyph} />
          ))}
        </LayoutBar>

        <Taskbar>
          <NewsWidget>
            <svg width="18" height="18" viewBox="0 0 18 18">
              <rect x="1" y="5" width="11" height="9" rx="2" fill="#2a7fc8" />
              <rect x="6" y="2" width="11" height="9" rx="2" fill="#3ea1d8" />
            </svg>
            <NewsBadge>4</NewsBadge>
            <NewsText>
              News for you
              <NewsSub>Berkshire Hatha...</NewsSub>
            </NewsText>
            <LangBar>
              <LangGlyph />
              <LangText>English</LangText>
              <LangGlyph />
              <LangGlyph />
              <LangGlyph />
              <LangGlyph />
              <LangGlyph />
            </LangBar>
          </NewsWidget>
          <svg width="15" height="15" viewBox="0 0 15 15">
            <path d="M0 0h7v7H0ZM8 0h7v7H8ZM0 8h7v7H0ZM8 8h7v7H8Z" fill="#1e90dc" />
          </svg>
          <SearchPill>
            <SearchIcon size={12} color="#2a2f38" />
            Search
            <PillPicture>
              <svg width="33" height="18" viewBox="0 0 33 18">
                <path d="M2 12l14-8 15 8v3H2Z" fill="#b9a88a" />
                <path d="M15 0h3v16h-3Z" fill="#6e8f6a" />
                <path d="M4 14h6v3H4ZM20 14h8v3h-8Z" fill="#b0483e" />
              </svg>
            </PillPicture>
          </SearchPill>
          <AppSlot $w={29}>
            <svg width="11" height="13" viewBox="0 0 11 13">
              <rect x="3" y="0" width="8" height="10" fill="#f5f5f5" stroke="#bbb" strokeWidth="0.5" />
              <rect x="0" y="3" width="8" height="10" fill="#222" />
            </svg>
          </AppSlot>
          <AppSlot $w={29}>
            <svg width="16" height="16" viewBox="0 0 16 16">
              <circle cx="8" cy="8" r="7.5" fill="#1b8fd0" />
              <path d="M3 9c0-3 3-5 6-4.500 3 .5 4.500 3 3.500 4.500H7c0 2 3 3 5.500 1.500C11 14 3 14 3 9Z" fill="#5fe0a0" />
            </svg>
          </AppSlot>
          <AppSlot $w={29}>
            <svg width="16" height="16" viewBox="0 0 16 16">
              <path d="M3 3c2-3 5-2 6 0l4 1c2 2 2 6 0 8-2 3-5 3-7 1l-3-1C1 10 1 6 3 3Z" fill="#b060d0" />
              <path d="M9 2c2-1 5 1 5 4l-4 2Z" fill="#f2a040" />
              <path d="M2 8l5 1-1 5c-3 0-4-3-4-6Z" fill="#3aa0e0" />
              <circle cx="8" cy="8" r="2" fill="#f4f4fa" />
            </svg>
          </AppSlot>
          <AppSlot $w={29} $open>
            <svg width="16" height="15" viewBox="0 0 16 15">
              <path d="M0 1h6l2 2h8v12H0Z" fill="#f5c63c" />
              <rect x="0" y="9" width="16" height="6" fill="#2f93d8" />
            </svg>
          </AppSlot>
          <AppSlot $w={29}>
            <svg width="15" height="16" viewBox="0 0 15 16">
              <path d="M0 4h15v10a2 2 0 0 1-2 2H2a2 2 0 0 1-2-2Z" fill="#1c4f8c" />
              <path d="M5 4V2h5v2" fill="none" stroke="#1c4f8c" />
              <path d="M4 7h3v3H4Z" fill="#e4553c" />
              <path d="M8 7h3v3H8Z" fill="#72b83c" />
              <path d="M4 11h3v3H4Z" fill="#2ea3e6" />
              <path d="M8 11h3v3H8Z" fill="#f2b632" />
            </svg>
          </AppSlot>
          <AppSlot $w={29}>
            <svg width="14" height="16" viewBox="0 0 14 16">
              <path d="M5 0h9v16H5Z" fill="#21a366" />
              <path d="M0 4h9v8H0Z" fill="#107c41" />
              <path d="M2.500 5.500l4 5M6.500 5.500l-4 5" stroke="#fff" />
            </svg>
          </AppSlot>
          <AppSlot $w={29}>
            <svg width="18" height="18" viewBox="0 0 18 18">
              <circle cx="8" cy="10" r="6.500" fill="none" stroke="#2aa75c" strokeWidth="2" />
              <path d="M5 7c0 3 2 6 6 6l1-2-2-1-1 1c-1 0-2-1-2-2l1-1-1-2Z" fill="#2aa75c" />
            </svg>
            <AppBadge>3</AppBadge>
          </AppSlot>
          <AppSlot $w={29} $current>
            <svg width="12" height="15" viewBox="0 0 12 15">
              <path d="M0 15L4.500 0h3L12 15H9L8 11H4l-1 4ZM4.800 8.500h2.400L6 4Z" fill="#b11a2e" />
            </svg>
          </AppSlot>
          <AppSlot $w={29} $open>
            <svg width="15" height="17" viewBox="0 0 15 17">
              <rect width="15" height="17" rx="2" fill="#e5483c" />
              <path d="M11 4H4v9h7" fill="none" stroke="#fff" strokeWidth="2.400" />
            </svg>
          </AppSlot>
          <AppSlot $w={29} $open>
            <svg width="15" height="17" viewBox="0 0 15 17">
              <rect width="15" height="17" rx="2" fill="#6cc024" />
              <path d="M11 4H4v9h7" fill="none" stroke="#fff" strokeWidth="2.400" />
            </svg>
          </AppSlot>
          <Tray>
            <ChevronUp size={11} />
            <ToolGap $w={9} />
            <Mic size={12} color="#5a7fa8" />
            <ToolGap $w={9} />
            <Wifi size={12} />
            <ToolGap $w={3} />
            <Volume2 size={12} />
            <ToolGap $w={4} />
            <BatteryMedium size={12} />
            <Clock>
              9:18 PM
              <br />
              11/2/2025
            </Clock>
            <ToolGap $w={5} />
            <Bell size={12} />
          </Tray>
        </Taskbar>

        <Palette>
          <PaletteSide>
            <span>✕</span>
            <svg width="8" height="8" viewBox="0 0 8 8">
              <path d="M1 1v6M3 4h4M5 1v6" stroke="#c5cad0" />
            </svg>
            <Gear size={9} />
            <SideTitle>LAYER PROPERTIES MANAGER</SideTitle>
            <SideFoot>
              <LayerTool dot="#9aa1aa" stack />
            </SideFoot>
          </PaletteSide>
          <PaletteMain>
            <PaletteHead>
              <CurrentLayer>Current layer: 0</CurrentLayer>
              <LayerSearch>
                <span>Search for laye</span>
                <SmallSearch />
              </LayerSearch>
            </PaletteHead>
            <PaletteTools>
              <Folder plus />
              <Folder />
              <ToolDivider />
              <Doc mark="#c7cbd1" />
              <ToolGap $w={15} />
              <LayerTool dot="#dca63a" />
              <LayerTool dot="#6b9fc8" />
              <LayerTool dot="#c4464a" />
              <LayerTool dot="#a0a6ae" />
              <ToolGap $w={223} />
              <Refresh />
              <Doc />
              <Gear />
            </PaletteTools>
            <Columns>
              <FilterPane>
                <FilterHead>
                  Filters
                  <CollapseMark>«</CollapseMark>
                </FilterHead>
                <FilterAll>
                  <svg width="8" height="8" viewBox="0 0 8 8">
                    <rect x="0.500" y="0.500" width="7" height="7" fill="#dfe2e6" />
                    <path d="M2 4h4" stroke="#333" />
                  </svg>
                  <LayerTool dot="#6fb35a" />
                  <AllChip>All</AllChip>
                </FilterAll>
                <FilterChild>
                  <svg width="9" height="9" viewBox="0 0 9 9">
                    <path d="M1 1h7v3H1ZM1 5h3v3H1ZM5 5h3v3H5Z" fill="#c7cbd1" />
                  </svg>
                  All U
                </FilterChild>
                <FilterScroll>
                  <ScrollThumb $w={20} />
                </FilterScroll>
              </FilterPane>
              <TableArea>
                <TableHead>
                  <Cell>S.</Cell>
                  <Cell>
                    Name
                    <HeadArrow />
                  </Cell>
                  <span />
                  {Head.map((h) => (
                    <Cell key={h}>{h}</Cell>
                  ))}
                  <Cell>Col...</Cell>
                  <Cell>Linety...</Cell>
                  <Cell>Linew...</Cell>
                  <Cell>Tran...</Cell>
                  <Cell>N</Cell>
                  <Cell>Description</Cell>
                </TableHead>
                {layerRows.map((row) => (
                  <TableRow key={row.name} $selected={row.selected}>
                    <Cell>
                      {row.current ? (
                        <svg width="9" height="8" viewBox="0 0 9 8">
                          <path d="M1 4l2.500 2.500L8 1" stroke="#58c06a" strokeWidth="1.300" fill="none" />
                        </svg>
                      ) : (
                        <Sheet color={row.sheet ?? '#5e9fd8'} />
                      )}
                    </Cell>
                    <Cell>{row.name}</Cell>
                    <NameGap />
                    <Cell>
                      <Bulb />
                    </Cell>
                    <Cell>
                      <Sun />
                    </Cell>
                    <Cell>
                      <Lock />
                    </Cell>
                    <Cell>
                      <Printer off={row.plotOff} dim={row.plotDim} />
                    </Cell>
                    <Cell>
                      <Swatch />
                      &nbsp;w...
                    </Cell>
                    <Cell>Conti...</Cell>
                    <Cell>
                      <LineMark />
                      {row.width}
                    </Cell>
                    <Cell>0</Cell>
                    <Cell>
                      <FreezeMark />
                    </Cell>
                    <Cell />
                  </TableRow>
                ))}
                <NameRule />
              </TableArea>
            </Columns>
            <BottomRow>
              <InvertBox />
              Invert
              <CollapseMark $ml={10}>«</CollapseMark>
              <TableScroll>
                <ScrollThumb $w={243} />
              </TableScroll>
            </BottomRow>
            <PaletteStatus>All: 3 layers displayed of 3 total layers</PaletteStatus>
          </PaletteMain>
        </Palette>

        <Cursor width="18" height="30" viewBox="0 0 18 30">
          <path d="M1 1V23L6 18L10 28L14 26L10 17H17Z" fill="#fff" stroke="#1a1a1a" strokeWidth="1.500" />
        </Cursor>

        <Sticker $x={874} $y={207} $size={42}>SUBSCRIBE</Sticker>
        <Sticker $x={833} $y={237} $size={42}>&amp; SHARE</Sticker>
      </Window>
    </Frame>
  );
}
